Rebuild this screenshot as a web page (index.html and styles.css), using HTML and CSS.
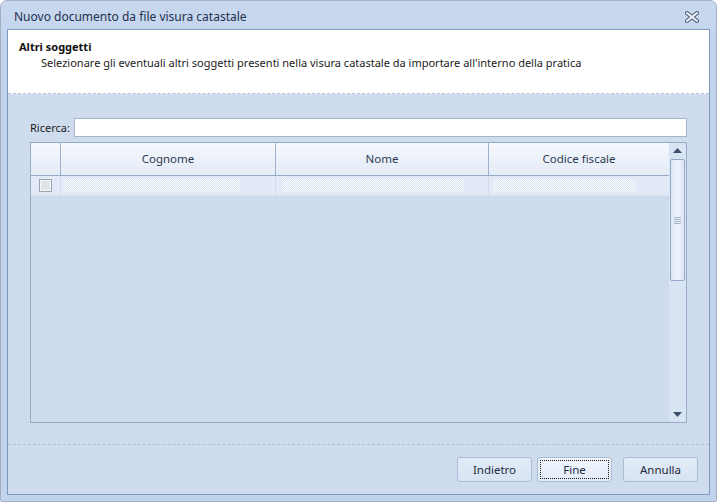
FILE: index.html
```html
<!DOCTYPE html>
<html lang="it">
<head>
    <meta charset="UTF-8">
    <title>Nuovo documento da file visura catastale</title>
    <link rel="stylesheet" href="styles.css">
</head>
<body>
    <div class="window">
        <div class="titlebar">
            <span class="title">Nuovo documento da file visura catastale</span>
            <svg class="close" width="14" height="12" viewBox="0 0 14 12">
                <path d="M2 2 L12 10 M12 2 L2 10" stroke="#46566e" stroke-width="4" stroke-linecap="square"/>
                <path d="M2 2 L12 10 M12 2 L2 10" stroke="#eef2f8" stroke-width="2" stroke-linecap="square"/>
            </svg>
        </div>

        <div class="client">
            <div class="wizard-head">
                <div class="step-title">Altri soggetti</div>
                <div class="step-desc">Selezionare gli eventuali altri soggetti presenti nella visura catastale da importare all'interno della pratica</div>
            </div>

            <div class="wizard-body">
                <div class="search">
                    <label for="ricerca">Ricerca:</label>
                    <input type="text" id="ricerca">
                </div>

                <div class="grid">
                    <div class="grid-main">
                        <div class="grid-row grid-header">
                            <div class="cell cell-check"></div>
                            <div class="cell cell-cognome">Cognome</div>
                            <div class="cell cell-nome">Nome</div>
                            <div class="cell cell-cf">Codice fiscale</div>
                        </div>
                        <div class="grid-row grid-data">
                            <div class="cell cell-check"><span class="checkbox"></span></div>
                            <div class="cell cell-cognome"><span class="blank blank-cognome"></span></div>
                            <div class="cell cell-nome"><span class="blank blank-nome"></span></div>
                            <div class="cell cell-cf"><span class="blank blank-cf"></span></div>
                        </div>
                    </div>
                    <div class="scrollbar">
                        <svg class="arrow" width="9" height="5" viewBox="0 0 9 5"><path d="M0 5 L4.5 0 L9 5 Z" fill="#3f4f6b"/></svg>
                        <div class="thumb"><span class="grip"></span></div>
                        <div class="track"></div>
                        <svg class="arrow" width="9" height="5" viewBox="0 0 9 5"><path d="M0 0 L4.5 5 L9 0 Z" fill="#3f4f6b"/></svg>
                    </div>
                </div>
            </div>

            <div class="wizard-foot">
                <button type="button" class="btn">Indietro</button>
                <button type="button" class="btn btn-focus"><span>Fine</span></button>
                <button type="button" class="btn btn-last">Annulla</button>
            </div>
        </div>
    </div>
</body>
</html>
```

FILE: styles.css
```css
* {
    margin: 0;
    padding: 0;
    box-sizing: border-box;
}

body {
    font-family: 'Noto Sans', 'Open Sans', sans-serif;
    font-size: 11px;
    color: #1b1b1b;
    background: #ffffff;
}

.window {
    width: 717px;
    height: 502px;
    border: 1px solid #a3b0c1;
    border-radius: 7px 7px 2px 2px;
    background: linear-gradient(#c8d8ee, #c2d4ec 40px, #c2d4ec);
    padding: 0 6px 6px 6px;
    display: flex;
    flex-direction: column;
}

.titlebar {
    height: 28px;
    display: flex;
    align-items: center;
    justify-content: space-between;
    padding: 0 11px 0 7px;
}

.title {
    font-size: 12px;
    color: #1e3150;
    padding-top: 3px;
}

.close {
    margin-top: 3px;
}

.client {
    flex: 1;
    border: 1px solid #7e98bd;
    background: #cfdcee;
    display: flex;
    flex-direction: column;
}

.wizard-head {
    height: 64px;
    background: #ffffff;
    border-bottom: 1px dashed #b7c1cf;
    padding: 9px 11px 0 11px;
}

.step-title {
    font-weight: bold;
    color: #101010;
    line-height: 16px;
}

.step-desc {
    padding-left: 22px;
    line-height: 16px;
    color: #1b1b1b;
}

.wizard-body {
    height: 351px;
    border-bottom: 1px dashed #b3c0d1;
    padding: 24px 22px 0 22px;
}

.search {
    display: flex;
    align-items: center;
    gap: 4px;
    height: 19px;
}

.search label {
    color: #1b1b1b;
}

.search input {
    flex: 1;
    height: 19px;
    border: 1px solid #a5b5cb;
    background: #ffffff;
    outline: none;
}

.grid {
    margin-top: 5px;
    height: 281px;
    border: 1px solid #97abc6;
    display: flex;
}

.grid-main {
    flex: 1;
}

.grid-row {
    display: flex;
}

.grid-header {
    height: 33px;
    background: linear-gradient(#f4f7fc, #e4ecf7);
    border-bottom: 1px solid #96a9c4;
    color: #2c3a50;
    font-size: 11.5px;
}

.grid-header .cell {
    border-right: 1px solid #9eb1cb;
    display: flex;
    align-items: center;
    justify-content: center;
    padding-bottom: 2px;
}

.grid-header .cell-cf {
    border-right: none;
}

.grid-data {
    height: 20px;
    background: #e1eaf6;
    border-bottom: 1px solid #d8e3f1;
}

.grid-data .cell {
    border-right: 1px solid #d2deee;
    display: flex;
    align-items: center;
    padding-left: 3px;
}

.grid-data .cell-cf {
    border-right: none;
}

.cell-check {
    width: 30px;
}

.cell-cognome {
    width: 215px;
}

.cell-nome {
    width: 213px;
}

.cell-cf {
    flex: 1;
}

.grid-data .cell-check {
    justify-content: center;
    padding-left: 0;
}

.checkbox {
    width: 13px;
    height: 13px;
    border: 1px solid #9aa3b0;
    background: #e0e3e8;
    box-shadow: inset 0 0 0 1px #f5f6f8;
}

.blank {
    height: 13px;
    background: repeating-conic-gradient(#ffffff 0 25%, #d6e1f1 0 50%) 0 0 / 2px 2px;
}

.blank-cognome {
    width: 176px;
}

.blank-nome {
    width: 182px;
    margin-left: 3px;
}

.blank-cf {
    width: 143px;
    margin-left: 1px;
}

.scrollbar {
    width: 17px;
    background: #d9e4f2;
    display: flex;
    flex-direction: column;
    align-items: center;
    padding: 5px 0 5px 0;
}

.arrow {
    flex: none;
}

.thumb {
    margin-top: 6px;
    width: 15px;
    height: 122px;
    border: 1px solid #94aac8;
    border-radius: 2px;
    background: linear-gradient(90deg, #dde7f4, #eef3fa 50%, #dde7f4);
    display: flex;
    align-items: center;
    justify-content: center;
}

.grip {
    width: 7px;
    height: 7px;
    background: repeating-linear-gradient(#a9b8cc 0 1px, #e4ebf5 1px 2px);
}

.track {
    flex: 1;
}

.wizard-foot {
    flex: 1;
    display: flex;
    justify-content: flex-end;
    align-items: flex-start;
    padding: 12px 11px 0 0;
    gap: 5px;
}

.btn {
    width: 75px;
    height: 25px;
    border: 1px solid #a9bbd5;
    border-radius: 3px;
    background: linear-gradient(#e3ecf8, #d7e3f3);
    font-family: 'Noto Sans', 'Open Sans', sans-serif;
    font-size: 11.5px;
    color: #1e2b40;
}

.btn-focus {
    background: linear-gradient(#f0f5fc, #e2ebf7);
    padding: 2px;
}

.btn-focus span {
    display: flex;
    align-items: center;
    justify-content: center;
    height: 100%;
    border: 1px dotted #1a1a1a;
}

.btn-last {
    margin-left: 6px;
}
```
